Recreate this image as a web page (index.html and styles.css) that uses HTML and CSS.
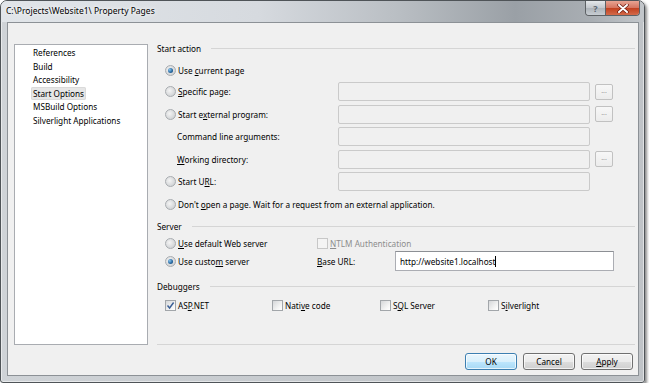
FILE: index.html
```html
<!DOCTYPE html>
<html lang="en">
<head>
    <meta charset="UTF-8">
    <title>C:\Projects\Website1\ Property Pages</title>
    <link rel="stylesheet" href="styles.css">
</head>
<body>
    <div class="window">
        <div class="titlebar">
            <span class="title">C:\Projects\Website1\ Property Pages</span>
            <div class="caption-buttons">
                <span class="cap-btn help">?</span>
                <span class="cap-btn close">
                    <svg width="12" height="9" viewBox="0 0 12 9">
                        <path d="M2 1 L10 8 M10 1 L2 8" stroke="#6b1a10" stroke-width="3.4" stroke-linecap="round"/>
                        <path d="M2 1 L10 8 M10 1 L2 8" stroke="#fff" stroke-width="2" stroke-linecap="round"/>
                    </svg>
                </span>
            </div>
        </div>

        <div class="client">
            <div class="main">
                <ul class="nav">
                    <li>References</li>
                    <li>Build</li>
                    <li>Accessibility</li>
                    <li class="active">Start Options</li>
                    <li>MSBuild Options</li>
                    <li>Silverlight Applications</li>
                </ul>

                <div class="pages">
                    <div class="group-header">Start action</div>
                    <div class="start-grid">
                        <label class="radio span-all"><span class="circle checked"></span><span>Use <u>c</u>urrent page</span></label>

                        <label class="radio"><span class="circle"></span><span><u>S</u>pecific page:</span></label>
                        <div class="field"></div>
                        <span class="browse">...</span>

                        <label class="radio"><span class="circle"></span><span>Start e<u>x</u>ternal program:</span></label>
                        <div class="field"></div>
                        <span class="browse">...</span>

                        <label class="sub-label"><span>Command line ar<u>g</u>uments:</span></label>
                        <div class="field"></div>
                        <span></span>

                        <label class="sub-label"><span><u>W</u>orking directory:</span></label>
                        <div class="field"></div>
                        <span class="browse">...</span>

                        <label class="radio"><span class="circle"></span><span>Start U<u>R</u>L:</span></label>
                        <div class="field"></div>
                        <span></span>

                        <label class="radio span-all"><span class="circle"></span><span>Don't <u>o</u>pen a page. Wait for a request from an external application.</span></label>
                    </div>

                    <div class="group-header server-header">Server</div>
                    <div class="server-grid">
                        <label class="radio"><span class="circle"></span><span><u>U</u>se default Web server</span></label>
                        <label class="check disabled span-2"><span class="box"></span><span><u>N</u>TLM Authentication</span></label>

                        <label class="radio"><span class="circle checked"></span><span>Use custo<u>m</u> server</span></label>
                        <label class="plain"><span><u>B</u>ase URL:</span></label>
                        <div class="url-field">http://website1.localhost<span class="caret"></span></div>
                    </div>

                    <div class="group-header debug-header">Debuggers</div>
                    <div class="debug-row">
                        <label class="check"><span class="box checked">
                            <svg width="9" height="9" viewBox="0 0 9 9"><path d="M1.5 4.5 L3.6 7 L7.6 1.5" fill="none" stroke="#3a5f96" stroke-width="1.4"/></svg>
                        </span><span>AS<u>P</u>.NET</span></label>
                        <label class="check"><span class="box"></span><span>Nati<u>v</u>e code</span></label>
                        <label class="check"><span class="box"></span><span>S<u>Q</u>L Server</span></label>
                        <label class="check"><span class="box"></span><span>S<u>i</u>lverlight</span></label>
                    </div>
                </div>
            </div>

            <div class="buttons">
                <button class="btn default">OK</button>
                <button class="btn">Cancel</button>
                <button class="btn"><u>A</u>pply</button>
            </div>
        </div>
    </div>
</body>
</html>
```

FILE: styles.css
```css
body {
    margin: 0;
    background: #fff;
    font-family: "Segoe UI", "Noto Sans", sans-serif;
    font-size: 8.2px;
    color: #000;
}

u {
    text-decoration-thickness: 1px;
    text-underline-offset: 1px;
}

.window {
    box-sizing: border-box;
    width: 645px;
    height: 383px;
    display: flex;
    flex-direction: column;
    border: 1px solid #4f5458;
    border-radius: 7px 7px 3px 3px;
    background: linear-gradient(to right, #cfd3d7, #c3c7cb 60%, #b4b8bc 85%, #c0c4c8);
    box-shadow: 2px 2px 3px rgba(0, 0, 0, 0.45), inset 0 0 0 1px rgba(255, 255, 255, 0.5);
}

.titlebar {
    height: 21px;
    display: flex;
    align-items: flex-start;
    border-radius: 6px 6px 0 0;
    background: linear-gradient(to right, #e1e5e9 0%, #d6dadf 40%, #b9bec3 62%, #9aa0a6 80%, #a9aeb3 92%, #c3c7cb 100%);
}

.title {
    padding: 4px 0 0 5px;
    font-size: 8.5px;
    text-shadow: 0 0 6px #fff, 0 0 3px #fff;
}

.caption-buttons {
    margin-left: auto;
    margin-right: 4px;
    display: flex;
    border: 1px solid #5d6165;
    border-top: none;
    border-radius: 0 0 4px 4px;
    overflow: hidden;
}

.cap-btn {
    height: 14px;
    display: flex;
    align-items: center;
    justify-content: center;
}

.help {
    width: 19px;
    color: #5b6570;
    font-weight: bold;
    font-size: 9px;
    background: linear-gradient(#e4e7ea, #c2c7cc 50%, #adb3b9 51%, #c8cdd2);
    border-right: 1px solid #5d6165;
}

.close {
    width: 33px;
    background: linear-gradient(#e8a493, #d4735e 50%, #c2401f 51%, #d36a4a);
}

.client {
    flex: 1;
    margin: 0 5px 6px 6px;
    padding: 21px 3px 0 6px;
    display: flex;
    flex-direction: column;
    background: #f0f0f0;
    border: 1px solid #8c9196;
}

.main {
    height: 301px;
    display: flex;
    gap: 9px;
}

.nav {
    box-sizing: border-box;
    width: 134px;
    margin: 0;
    padding: 1px 0 0 18px;
    list-style: none;
    background: #fff;
    border: 1px solid #a9acb1;
}

.nav li {
    line-height: 13.5px;
}

.nav li.active {
    width: fit-content;
    margin-left: -2px;
    padding: 0 2px;
    background: #e6e6e6;
    border-radius: 2px;
    box-shadow: inset 0 0 0 1px #dadada;
}

.pages {
    flex: 1;
    margin-top: -3px;
    border-bottom: 1px solid #d5d5d5;
}

.group-header {
    height: 14px;
    display: flex;
    align-items: center;
    gap: 10px;
}

.group-header::after {
    content: "";
    flex: 1;
    height: 1px;
    background: #d5d5d5;
}

.start-grid {
    margin: 6.5px 0 0 8px;
    display: grid;
    grid-template-columns: 168px 252px 18px;
    grid-template-rows: 17px repeat(6, 19px);
    column-gap: 5px;
    row-gap: 3.5px;
    align-items: center;
}

.span-all {
    grid-column: 1 / 4;
}

.span-2 {
    grid-column: 2 / 4;
}

.radio, .check, .sub-label, .plain {
    display: flex;
    align-items: center;
    white-space: nowrap;
}

.sub-label {
    padding-left: 12px;
}

.circle {
    box-sizing: border-box;
    width: 11px;
    height: 11px;
    margin-right: 2px;
    border-radius: 50%;
    border: 1px solid #a8acb0;
    background: radial-gradient(circle at 40% 40%, #f4f4f4, #d8dadc 60%, #c6c9cc);
    display: flex;
    align-items: center;
    justify-content: center;
}

.circle.checked::after {
    content: "";
    width: 5px;
    height: 5px;
    border-radius: 50%;
    background: radial-gradient(circle at 35% 35%, #8cc6ee, #2a6ca4 55%, #173e66);
}

.field {
    box-sizing: border-box;
    height: 19px;
    border: 1px solid #cacaca;
    border-radius: 2px;
    background: #f0f0f0;
}

.browse {
    box-sizing: border-box;
    width: 18px;
    height: 16px;
    border: 1px solid #c1c1c1;
    border-radius: 2px;
    background: linear-gradient(#f7f7f7, #ececec);
    color: #9a9a9a;
    font-size: 7px;
    line-height: 12px;
    text-align: center;
}

.server-header {
    margin-top: 5.5px;
}

.server-grid {
    margin: 2px 0 0 8px;
    display: grid;
    grid-template-columns: 152px 78px 219px;
    grid-template-rows: 16px 20px;
    align-items: center;
}

.box {
    box-sizing: border-box;
    width: 11px;
    height: 11px;
    margin-right: 2px;
    border: 1px solid #a2a6aa;
    background: linear-gradient(135deg, #d5d7d9, #f6f6f6 70%, #fff);
    display: flex;
    align-items: center;
    justify-content: center;
}

.check.disabled {
    color: #8d8d8d;
}

.check.disabled .box {
    border-color: #c7c7c7;
    background: #f4f4f4;
}

.url-field {
    box-sizing: border-box;
    height: 20px;
    padding: 0 4px;
    display: flex;
    align-items: center;
    background: #fff;
    border: 1px solid #abadb3;
    border-top-color: #8c8f94;
}

.caret {
    width: 1px;
    height: 11px;
    background: #000;
}

.debug-header {
    margin-top: 8px;
}

.debug-row {
    margin: 4px 0 0 8px;
    height: 16px;
    display: grid;
    grid-template-columns: 107px 108px 108px 108px;
    align-items: center;
}

.buttons {
    margin-top: 8px;
    padding-right: 2px;
    display: flex;
    justify-content: flex-end;
    gap: 6px;
}

.btn {
    width: 52px;
    height: 17px;
    padding: 0;
    font: inherit;
    color: #000;
    border: 1px solid #707070;
    border-radius: 3px;
    background: linear-gradient(#f2f2f2, #ebebeb 50%, #dddddd 51%, #cfcfcf);
    box-shadow: inset 0 0 0 1px rgba(255, 255, 255, 0.7);
}

.btn.default {
    border-color: #3c7fb1;
    background: linear-gradient(#eaf6fd, #d9f0fc 50%, #bee6fd 51%, #a7d9f5);
}
```
